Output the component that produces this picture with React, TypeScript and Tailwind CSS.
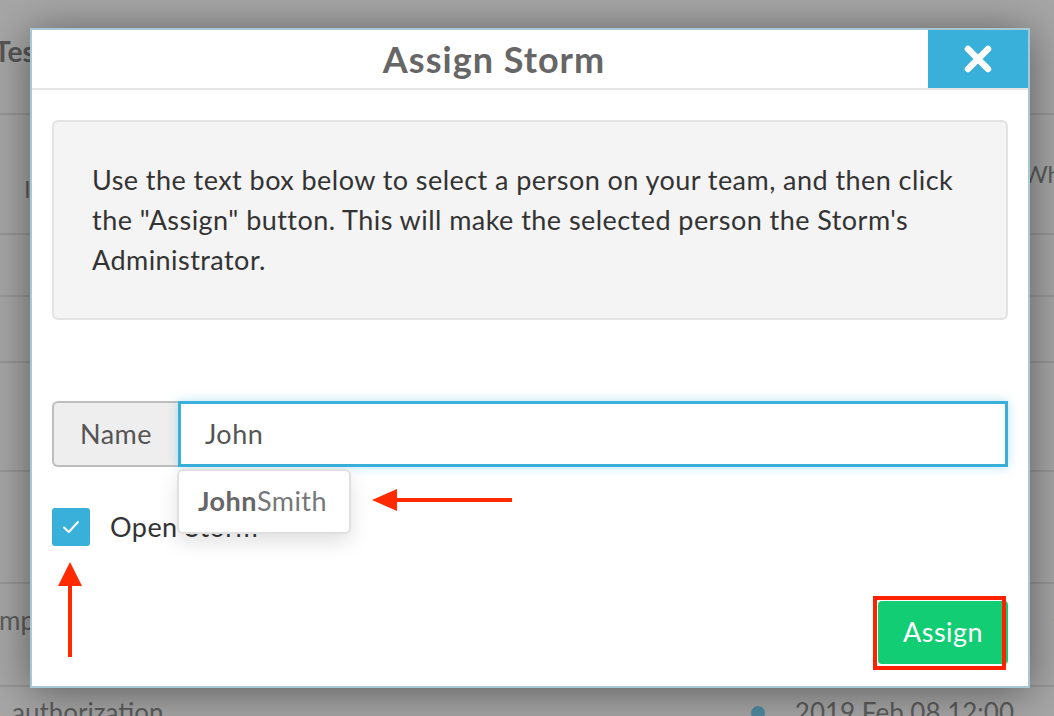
import React from "react";

const font = { fontFamily: "Lato, 'Open Sans', sans-serif" };

// body copy in the reference is a wide humanist sans; Lato + a little tracking matches its widths
const bodyText = "text-[27px] tracking-[0.45px]";

function BackgroundTable() {
  return (
    <div className="relative h-[716px] w-[1054px] overflow-hidden bg-[#a6a6a6] text-[#5c5c5c]">
      <div className="h-[115px] border-b-2 border-[#979797] pt-[30px]">
        <p className="ml-[-6px] text-[28px] font-bold text-[#555]">Test Storm</p>
      </div>
      <div className="flex h-[120px] items-center justify-between border-b-2 border-[#979797] pt-[30px]">
        <span className="ml-[24px] text-[24px]">In</span>
        <span className="mr-[-34px] mt-[-30px] text-[24px]">White</span>
      </div>
      <div className="h-[62px] border-b-2 border-[#979797]" />
      <div className="h-[66px] border-b-2 border-[#979797]" />
      <div className="h-[109px] border-b-2 border-[#979797]" />
      <div className="h-[112px] border-b-2 border-[#979797]" />
      <div className="flex h-[103px] items-center justify-between border-b-2 border-[#979797]">
        <span className="ml-[-8px] mt-[-28px] text-[26px]">Import</span>
        <span className="mr-[-60px] mt-[-10px] text-[26px]">Team</span>
      </div>
      <div className="flex items-start justify-between pt-[6px] text-[26px]">
        <span className="ml-[12px]">authorization</span>
        <span className="mr-[40px] flex items-center gap-[30px]">
          <span className="h-[14px] w-[14px] rounded-full bg-[#4f8aa0]" />
          2019 Feb 08 12:00
        </span>
      </div>
    </div>
  );
}

function CheckIcon() {
  return (
    <svg width="20" height="16" viewBox="0 0 20 16" fill="none">
      <path d="M3 8.5 L7.8 13 L17 3" stroke="white" strokeWidth="2" strokeLinecap="round" strokeLinejoin="round" />
    </svg>
  );
}

function CloseIcon() {
  return (
    <svg width="30" height="30" viewBox="0 0 30 30">
      <path d="M5 5 L25 25 M25 5 L5 25" stroke="white" strokeWidth="6.5" strokeLinecap="round" />
    </svg>
  );
}

function AssignModal() {
  return (
    <div className="absolute left-[30px] top-[28px] h-[660px] w-[1000px] border-2 border-[#a9c8d6] bg-white shadow-[0_4px_40px_rgba(0,0,0,0.45)]">
      <div className="flex h-[60px] border-b-2 border-[#e6e6e6]">
        <h2 className="flex flex-1 items-center justify-center pl-[28px] text-[36px] font-bold tracking-[1px] text-[#666]">
          Assign Storm
        </h2>
        <button className="flex h-[58px] w-[100px] items-center justify-center bg-[#38b0da]">
          <CloseIcon />
        </button>
      </div>

      <div className="px-[20px] pt-[30px]">
        <div className={`h-[200px] rounded-[6px] border-2 border-[#e3e3e3] bg-[#f4f4f4] px-[38px] pt-[38px] leading-[40px] text-[#333] ${bodyText}`}>
          Use the text box below to select a person on your team, and then click the "Assign" button. This will make the selected person the Storm's Administrator.
        </div>

        <div className="relative mt-[81px] flex h-[66px]">
          <div className={`flex w-[126px] items-center justify-center rounded-l-[6px] border-2 border-r-0 border-[#bdbdbd] bg-[#eeeeee] text-[#555] ${bodyText}`}>
            Name
          </div>
          <div className={`flex flex-1 items-center border-[3px] border-[#38b0da] pl-[24px] text-[#555] shadow-[0_0_10px_rgba(56,176,218,0.35)] ${bodyText}`}>
            John
          </div>
          <div className={`absolute left-[125px] top-[68px] z-10 flex h-[65px] w-[174px] items-center rounded-[6px] border-2 border-[#e0e0e0] bg-white pl-[19px] text-[#777] shadow-[0_8px_20px_rgba(0,0,0,0.12)] ${bodyText}`}>
            <span className="font-bold text-[#666]">John</span>
            <span>Smith</span>
          </div>
        </div>

        <div className="mt-[41px] flex h-[38px] items-center gap-[20px]">
          <div className="flex h-[38px] w-[38px] items-center justify-center rounded-[3px] bg-[#38b0da]">
            <CheckIcon />
          </div>
          <span className={`text-[#333] ${bodyText}`}>Open Storm</span>
        </div>

        <div className="mt-[55px] flex justify-end">
          <div className="relative">
            <button className={`flex h-[63px] w-[130px] items-center justify-center rounded-[4px] bg-[#12cd74] text-white ${bodyText}`}>
              Assign
            </button>
            {/* red annotation box drawn over the button */}
            <span className="pointer-events-none absolute left-[-5px] top-[-5px] h-[74px] w-[133px] border-[4.5px] border-[#ff2200]" />
          </div>
        </div>
      </div>
    </div>
  );
}

function Arrows() {
  return (
    <>
      <svg className="absolute left-[370px] top-[488px]" width="145" height="24" viewBox="0 0 145 24">
        <polygon points="2,12 27,1 27,23" fill="#ff2a00" />
        <rect x="25" y="10" width="117" height="4" fill="#ff2a00" />
      </svg>
      <svg className="absolute left-[58px] top-[560px]" width="24" height="100" viewBox="0 0 24 100">
        <polygon points="12,2 0,26 24,26" fill="#ff2a00" />
        <rect x="10" y="24" width="4" height="73" fill="#ff2a00" />
      </svg>
    </>
  );
}

export default function App() {
  return (
    <div className="relative h-[716px] w-[1054px] overflow-hidden" style={font}>
      <BackgroundTable />
      <AssignModal />
      <Arrows />
    </div>
  );
}
